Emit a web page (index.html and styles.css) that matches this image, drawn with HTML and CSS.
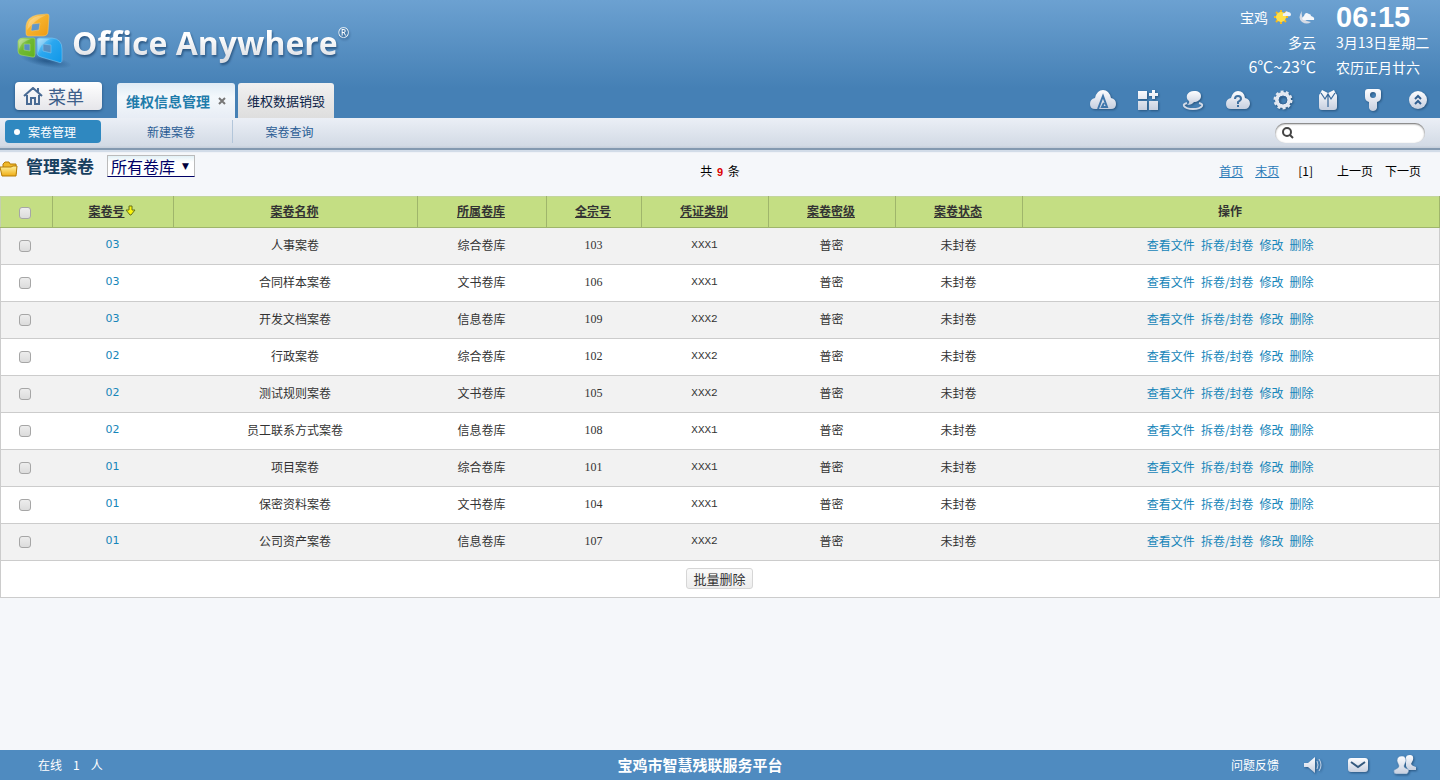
FILE: index.html
```html
<!DOCTYPE html>
<html lang="zh-CN">
<head>
<meta charset="utf-8">
<title>Office Anywhere</title>
<link rel="stylesheet" href="styles.css">
</head>
<body>
<svg class="defs" aria-hidden="true">
  <defs>
    <linearGradient id="silver" x1="0" y1="0" x2="0" y2="1"><stop offset="0" stop-color="#fdfdff"/><stop offset="1" stop-color="#c6cfdf"/></linearGradient>
    <linearGradient id="orange" x1="0" y1="0" x2="1" y2="1"><stop offset="0" stop-color="#fbdc92"/><stop offset=".4" stop-color="#f6b32d"/><stop offset="1" stop-color="#ee9a14"/></linearGradient>
    <linearGradient id="green" x1="0" y1="0" x2="1" y2="1"><stop offset="0" stop-color="#b9e08e"/><stop offset=".4" stop-color="#72b935"/><stop offset="1" stop-color="#62b31e"/></linearGradient>
    <linearGradient id="blue" x1="0" y1="0" x2="1" y2="1"><stop offset="0" stop-color="#9ddaf8"/><stop offset=".4" stop-color="#2ba7ef"/><stop offset="1" stop-color="#0f97e8"/></linearGradient>
    <linearGradient id="gold" x1="0" y1="0" x2="0" y2="1"><stop offset="0" stop-color="#fff3a0"/><stop offset="1" stop-color="#efac14"/></linearGradient>
    <radialGradient id="shade"><stop offset="0" stop-color="#1d4f80" stop-opacity=".8"/><stop offset="1" stop-color="#1d4f80" stop-opacity="0"/></radialGradient>
  </defs>
</svg>

<header class="header">
  <div class="brand">
    <svg class="brand-mark" width="60" height="60" viewBox="0 0 60 60" aria-hidden="true">
      <ellipse cx="34" cy="50" rx="26" ry="6" fill="url(#shade)" transform="rotate(10 34 50)"/>
      <path fill="url(#orange)" stroke="#f9c765" stroke-width=".6" fill-rule="evenodd" d="M14 15Q15 6 25 4L35 3Q37 3 37 5L36 20Q36 25 31 25L16 25Q14 25 14 22ZM20 13L19 19Q19 20 20 20L27 19L28 12Z"/>
      <path fill="url(#green)" stroke="#a5d96f" stroke-width=".6" fill-rule="evenodd" d="M6 30Q7 27 11 27L22 27Q23 27 23 29L23 44Q23 47 20 46L9 44Q6 43 6 40ZM12 33V39L18 40V33Z"/>
      <path fill="url(#blue)" stroke="#7cc8f4" stroke-width=".6" fill-rule="evenodd" d="M25 29Q25 27 28 27L40 27Q50 28 50 38L50 49Q50 53 46 51L29 46Q25 45 25 42ZM31 33V40L39 42V34Z"/>
      <path fill="#fff" opacity=".25" d="M15 19Q16 7 26 5L34 4Q23 9 15 19ZM26 42V30Q26 28 29 28H38Q29 32 26 42ZM7 38V31Q8 28 11 28H19Q10 30 7 38Z"/>
    </svg>
    <h1 class="brand-name">Office Anywhere<sup class="reg">®</sup></h1>
  </div>

  <div class="status">
    <div class="weather">
      <div class="city"><span>宝鸡</span>
        <svg width="18" height="16" viewBox="0 0 18 16" aria-hidden="true"><path d="M7 1V15M0 8H14M2 3L12 13M12 3L2 13" stroke="#f3b71f" stroke-width="2"/><circle cx="7" cy="8" r="5" fill="#ffe14a"/><path fill="#eef2f8" d="M9 7Q8 4 11 4Q12 1 14 3Q17 3 17 6Q16 8 14 7Z"/></svg>
        <svg width="18" height="16" viewBox="0 0 18 16" aria-hidden="true"><path fill="#d6dbe5" d="M4 2Q2 12 13 13Q9 16 4 13Q-1 9 4 2Z"/><path fill="#f6f8fb" d="M5 11Q3 9 6 7Q7 2 11 5Q13 5 13 7Q17 8 16 11Z"/></svg>
      </div>
      <div class="sky">多云</div>
      <div class="temp">6℃~23℃</div>
    </div>
    <div class="clock">
      <time class="time">06:15</time>
      <div class="date">3月13日星期二</div>
      <div class="lunar">农历正月廿六</div>
    </div>
  </div>

  <button class="menu" type="button">
    <svg width="20" height="18" viewBox="0 0 20 18" fill="none" stroke="#4a6b94" stroke-width="2" aria-hidden="true"><path d="M1 9L10 1L19 9M4 8V17H8V11H12V17H16V8M15 1V5"/></svg>
    <span>菜单</span>
  </button>
  <nav class="tabs">
    <div class="tab tab-on"><a href="#">维权信息管理</a><button class="close" type="button" aria-label="关闭"><svg width="8" height="8" viewBox="0 0 8 8" stroke="#777" stroke-width="2"><path d="M1 1L7 7M7 1L1 7"/></svg></button></div>
    <div class="tab"><a href="#">维权数据销毁</a></div>
  </nav>
  <div class="tools">
    <button type="button" aria-label="应用"><svg width="28" height="22" viewBox="0 0 28 22"><path fill="url(#silver)" d="M6 20Q1 20 1 15Q1 10 6 9Q8 1 14 1Q20 1 22 9Q27 10 27 15Q27 20 22 20Z"/><path fill="none" stroke="#3f76ab" stroke-width="2" d="M9 20L14 7L18 18H13L15 14"/></svg></button>
    <button type="button" aria-label="门户"><svg width="22" height="22" viewBox="0 0 22 22" fill="url(#silver)"><path d="M1 2H10V10H1ZM1 12H10V21H1ZM12 12H21V21H12ZM15 1H18V4H21V7H18V10H15V7H12V4H15Z"/></svg></button>
    <button type="button" aria-label="消息"><svg width="22" height="22" viewBox="0 0 22 22"><path fill="none" stroke="#d2dae7" stroke-width="2" d="M5 14Q1 15 2 17Q4 20 11 20Q18 20 20 17Q21 15 17 14"/><path fill="url(#silver)" d="M12 2C17 2 19 4 19 7C19 11 15 13 12 13Q10 16 5 16Q8 14 7 12Q4 10 5 6Q7 2 12 2Z"/></svg></button>
    <button type="button" aria-label="帮助"><svg width="26" height="22" viewBox="0 0 26 22"><path fill="url(#silver)" d="M6 20Q1 20 1 15Q1 10 6 9Q8 2 13 2Q19 2 20 9Q25 10 25 15Q24 20 20 20Z"/><path fill="none" stroke="#3f70a0" stroke-width="2" d="M10 10Q10 7 13 7Q16 7 16 10Q16 11 13 13V15M13 16V18"/></svg></button>
    <button type="button" aria-label="设置"><svg width="22" height="22" viewBox="0 0 22 22" fill="none"><circle cx="11" cy="11" r="6" stroke-width="4" stroke="#e3e8f1"/><circle cx="11" cy="11" r="8" stroke-width="3" stroke-dasharray="2.8 2.23" stroke="#e3e8f1"/><circle cx="11" cy="11" r="4" stroke-width="1" stroke="#35679a"/></svg></button>
    <button type="button" aria-label="换肤"><svg width="20" height="22" viewBox="0 0 20 22"><path fill="url(#silver)" d="M4 1L10 4L16 1L18 5Q19 5 19 7V18Q19 21 16 21H4Q1 21 1 18V7Q1 5 2 5Z"/><path fill="none" stroke="#35679a" stroke-width="1.2" d="M3 4L7 10L10 5L13 10L17 4M10 6V18"/></svg></button>
    <button type="button" aria-label="密码"><svg width="18" height="22" viewBox="0 0 18 22"><path fill="url(#silver)" fill-rule="evenodd" d="M4 0H14Q17 0 17 3V8Q17 12 13 13V19Q12 22 9 22Q6 22 5 19V13Q1 12 1 8V3Q1 0 4 0ZM9 3A3 3 0 1 0 9 9A3 3 0 1 0 9 3Z"/></svg></button>
    <button type="button" aria-label="收起"><svg width="18" height="22" viewBox="0 0 18 22"><circle cx="9" cy="11" r="9" fill="url(#silver)"/><path fill="none" stroke="#315f91" stroke-width="2" d="M6 10L9 7L12 10M6 15L9 12L12 15"/></svg></button>
  </div>
</header>

<nav class="subnav">
  <a class="sub sub-on" href="#">案卷管理</a>
  <a class="sub" href="#">新建案卷</a>
  <a class="sub sub-line" href="#">案卷查询</a>
  <label class="search">
    <svg width="12" height="12" viewBox="0 0 12 12" fill="none" stroke="#444" stroke-width="2" aria-hidden="true"><circle cx="5" cy="5" r="4"/><path d="M8 8L11 11"/></svg>
    <input type="search" aria-label="搜索">
  </label>
</nav>

<main class="main">
  <div class="bar">
    <div class="bar-title">
      <svg width="18" height="16" viewBox="0 0 18 16" aria-hidden="true"><path fill="#f0b829" stroke="#b57d08" d="M3 13V3L5 1H9L10 3H16V13Z"/><path fill="url(#gold)" stroke="#b57d08" d="M0 6H11L13 5H17L16 15H2Z"/></svg>
      <h2>管理案卷</h2>
      <span class="pick"><select aria-label="卷库"><option>所有卷库</option></select></span>
    </div>
    <p class="count">共 <b>9</b> 条</p>
    <div class="pager"><a href="#">首页</a><a href="#">末页</a><span class="cur">[1]</span><span class="prev">上一页</span><span>下一页</span></div>
  </div>

  <table class="grid">
    <colgroup><col class="c-check"><col class="c-no"><col class="c-name"><col class="c-lib"><col class="c-all"><col class="c-mid"><col class="c-mid"><col class="c-mid"><col></colgroup>
    <thead><tr>
      <th><input type="checkbox" aria-label="全选"></th>
      <th><a href="#">案卷号</a><svg class="sort" width="11" height="11" viewBox="0 0 11 11" aria-hidden="true"><path fill="#fbf40b" stroke="#66701a" d="M4 1H7V5H10L6 10H5L1 5H4Z"/></svg></th>
      <th><a href="#">案卷名称</a></th><th><a href="#">所属卷库</a></th><th><a href="#">全宗号</a></th><th><a href="#">凭证类别</a></th><th><a href="#">案卷密级</a></th><th><a href="#">案卷状态</a></th><th>操作</th>
    </tr></thead>
    <tbody>
      <tr><td><input type="checkbox" aria-label="人事案卷"></td><td class="no"><a href="#">03</a></td><td>人事案卷</td><td>综合卷库</td><td class="num">103</td><td class="code">XXX1</td><td>普密</td><td>未封卷</td><td class="ops"><a href="#">查看文件</a><a href="#">拆卷/封卷</a><a href="#">修改</a><a href="#">删除</a></td></tr>
      <tr><td><input type="checkbox" aria-label="合同样本案卷"></td><td class="no"><a href="#">03</a></td><td>合同样本案卷</td><td>文书卷库</td><td class="num">106</td><td class="code">XXX1</td><td>普密</td><td>未封卷</td><td class="ops"><a href="#">查看文件</a><a href="#">拆卷/封卷</a><a href="#">修改</a><a href="#">删除</a></td></tr>
      <tr><td><input type="checkbox" aria-label="开发文档案卷"></td><td class="no"><a href="#">03</a></td><td>开发文档案卷</td><td>信息卷库</td><td class="num">109</td><td class="code">XXX2</td><td>普密</td><td>未封卷</td><td class="ops"><a href="#">查看文件</a><a href="#">拆卷/封卷</a><a href="#">修改</a><a href="#">删除</a></td></tr>
      <tr><td><input type="checkbox" aria-label="行政案卷"></td><td class="no"><a href="#">02</a></td><td>行政案卷</td><td>综合卷库</td><td class="num">102</td><td class="code">XXX2</td><td>普密</td><td>未封卷</td><td class="ops"><a href="#">查看文件</a><a href="#">拆卷/封卷</a><a href="#">修改</a><a href="#">删除</a></td></tr>
      <tr><td><input type="checkbox" aria-label="测试规则案卷"></td><td class="no"><a href="#">02</a></td><td>测试规则案卷</td><td>文书卷库</td><td class="num">105</td><td class="code">XXX2</td><td>普密</td><td>未封卷</td><td class="ops"><a href="#">查看文件</a><a href="#">拆卷/封卷</a><a href="#">修改</a><a href="#">删除</a></td></tr>
      <tr><td><input type="checkbox" aria-label="员工联系方式案卷"></td><td class="no"><a href="#">02</a></td><td>员工联系方式案卷</td><td>信息卷库</td><td class="num">108</td><td class="code">XXX1</td><td>普密</td><td>未封卷</td><td class="ops"><a href="#">查看文件</a><a href="#">拆卷/封卷</a><a href="#">修改</a><a href="#">删除</a></td></tr>
      <tr><td><input type="checkbox" aria-label="项目案卷"></td><td class="no"><a href="#">01</a></td><td>项目案卷</td><td>综合卷库</td><td class="num">101</td><td class="code">XXX1</td><td>普密</td><td>未封卷</td><td class="ops"><a href="#">查看文件</a><a href="#">拆卷/封卷</a><a href="#">修改</a><a href="#">删除</a></td></tr>
      <tr><td><input type="checkbox" aria-label="保密资料案卷"></td><td class="no"><a href="#">01</a></td><td>保密资料案卷</td><td>文书卷库</td><td class="num">104</td><td class="code">XXX1</td><td>普密</td><td>未封卷</td><td class="ops"><a href="#">查看文件</a><a href="#">拆卷/封卷</a><a href="#">修改</a><a href="#">删除</a></td></tr>
      <tr><td><input type="checkbox" aria-label="公司资产案卷"></td><td class="no"><a href="#">01</a></td><td>公司资产案卷</td><td>信息卷库</td><td class="num">107</td><td class="code">XXX2</td><td>普密</td><td>未封卷</td><td class="ops"><a href="#">查看文件</a><a href="#">拆卷/封卷</a><a href="#">修改</a><a href="#">删除</a></td></tr>
    </tbody>
    <tfoot><tr><td colspan="9"><button class="batch" type="button">批量删除</button></td></tr></tfoot>
  </table>
</main>

<footer class="footer">
  <div class="online"><span>在线</span><span class="online-n">1</span><span>人</span></div>
  <div class="platform">宝鸡市智慧残联服务平台</div>
  <div class="foot-tools">
    <a href="#">问题反馈</a>
    <button type="button" aria-label="声音"><svg width="20" height="20" viewBox="0 0 20 20"><path fill="url(#silver)" d="M1 8H5L12 2V18L5 12H1Z"/><path fill="none" stroke="#c4d2e4" d="M14 6Q16 10 14 14M16 4Q20 10 16 16"/></svg></button>
    <button type="button" aria-label="短信"><svg width="22" height="18" viewBox="0 0 22 18"><rect x="1" y="2" width="20" height="14" rx="3" fill="url(#silver)"/><path fill="none" stroke="#34597e" stroke-width="2" d="M4 6L11 11L18 6"/></svg></button>
    <button type="button" aria-label="组织"><svg width="24" height="20" viewBox="0 0 24 20" fill="url(#silver)"><path d="M13 5Q12 0 17 0Q21 0 20 5L18 9Q19 11 23 12V15H15L13 11Z"/><path stroke="#5b8cba" stroke-width=".5" d="M4 6Q4 1 9 1Q13 1 13 6L11 11Q11 13 15 14Q17 16 14 19H3Q0 19 1 15Q6 13 6 11Z"/></svg></button>
  </div>
</footer>
</body>
</html>
```

FILE: styles.css
```css
* { box-sizing: border-box; }
html, body { margin: 0; }
body {
  display: flex;
  flex-direction: column;
  min-height: 100vh;
  background: #f5f7fa;
  color: #333;
  font: 12px/16px "Noto Sans CJK SC", sans-serif;
}
a { color: #1585b9; text-decoration: none; }
h1, h2, p { margin: 0; }
svg { display: block; flex: none; }
button { border: 0; padding: 0; background: none; font: inherit; color: inherit; cursor: pointer; }
.defs { position: absolute; width: 0; height: 0; }

.header {
  display: grid;
  grid-template-columns: 102px auto 1fr;
  grid-template-rows: 82px 36px;
  background: linear-gradient(#6ca1d1, #4580b5 75%, #4580b5);
}
.brand { grid-column: 1 / 3; display: flex; padding: 11px 0 0 12px; }
.brand-name {
  display: flex;
  align-items: flex-start;
  padding-top: 8px;
  font: 700 32px/48px "Open Sans", sans-serif;
  white-space: nowrap;
  color: transparent;
  background: linear-gradient(#fff 35%, #c9ced6 85%);
  background-clip: text;
  -webkit-background-clip: text;
  filter: drop-shadow(1px 2px 1px #2c5884);
}
.reg { font: 14px/28px "Open Sans", sans-serif; }
.status { display: flex; justify-content: flex-end; gap: 20px; color: #fff; padding: 3px 9px 0 0; }
.weather { text-align: right; }
.city { display: flex; align-items: center; justify-content: flex-end; gap: 6px; height: 28px; font-size: 14px; }
.sky { font-size: 14px; line-height: 22px; }
.temp { font-size: 16px; line-height: 26px; }
.clock { width: 95px; font-size: 14px; white-space: nowrap; }
.time { display: block; font: bold 29px/28px "Liberation Sans", sans-serif; }
.date { line-height: 22px; }
.lunar { line-height: 28px; }

.menu {
  display: flex;
  align-items: center;
  gap: 5px;
  width: 87px;
  height: 28px;
  margin-left: 15px;
  padding-left: 8px;
  border-radius: 4px;
  background: linear-gradient(#fff, #e6e6ea);
  box-shadow: 0 1px 3px #234e7a;
  color: #3d5f8a;
  font-size: 18px;
}
.tabs { display: flex; align-items: flex-end; gap: 3px; padding-left: 15px; }
.tab {
  display: flex;
  align-items: center;
  gap: 8px;
  height: 35px;
  padding: 0 9px;
  border-radius: 3px 3px 0 0;
  background: linear-gradient(#f0f0f0, #dedede);
  font-size: 13px;
}
.tab a { color: #0c2347; }
.tab-on { background: linear-gradient(#dfebf5, #f3f8fc 40%, #e8edf5); font-size: 14px; font-weight: 700; }
.tab-on a { color: #1f7cab; }
.tools { display: flex; justify-content: flex-end; align-items: center; }
.tools button { display: flex; justify-content: center; width: 45px; }
.tools svg, .foot-tools svg { filter: drop-shadow(1px 1px 1px #285580); }

.subnav {
  display: flex;
  align-items: center;
  height: 32px;
  padding: 0 15px 3px 5px;
  background: linear-gradient(#ebeff6, #d2dae5 28px, #c7d0dc 29px);
  border-bottom: 2px solid #8399b0;
  box-shadow: 0 2px 1px #d2dce8;
}
.sub { width: 114px; color: #2a5c94; text-align: center; line-height: 23px; }
.sub-on {
  display: flex;
  align-items: center;
  gap: 8px;
  width: 96px;
  margin-right: 9px;
  padding-left: 9px;
  border-radius: 4px;
  background: #2f88c0;
  color: #fff;
}
.sub-on::before { content: ""; width: 6px; height: 6px; border-radius: 50%; background: #fff; }
.sub-line { border-left: 1px solid #b3c6da; }
.subnav .sub:nth-child(2) { width: 122px; }
.search {
  display: flex;
  align-items: center;
  gap: 6px;
  width: 150px;
  height: 20px;
  margin: 2px 0 0 auto;
  padding: 0 7px;
  border-radius: 10px;
  background: #fff;
  box-shadow: inset 0 1px 2px #666;
}
.search input { flex: 1; min-width: 0; height: 16px; border: 0; padding: 0; outline: 0; background: none; }

.main { flex: 1; }
.bar { display: grid; grid-template-columns: 1fr auto 1fr; height: 46px; color: #000; }
.bar-title { display: flex; align-items: flex-start; padding-top: 4px; }
.bar-title svg { margin-top: 7px; }
.bar-title h2 { margin: 0 13px 0 8px; font-size: 17px; line-height: 24px; color: #17405f; }
.pick { position: relative; }
.pick::after { content: "▼"; position: absolute; right: 6px; top: 4px; font: 9px/16px "DejaVu Sans", sans-serif; color: #00003c; pointer-events: none; }
.pick select {
  appearance: none;
  width: 88px;
  height: 22px;
  margin-top: 1px;
  padding: 0 3px;
  border: 1px solid #bbb;
  border-bottom-color: #000066;
  border-radius: 0;
  background: linear-gradient(#e2f0f6, #fff 6px);
  color: #000066;
  font: 16px/20px "Noto Sans CJK SC", sans-serif;
}
.count { padding-top: 13px; }
.count b { margin: 0 2px; color: #d00; font: bold 11px/16px "Liberation Sans", sans-serif; }
.pager { display: flex; justify-content: flex-end; gap: 12px; padding: 13px 19px 0 0; }
.pager a { color: #2a7ab8; text-decoration: underline; }
.cur { margin: 0 12px 0 7px; }

.grid { width: 100%; table-layout: fixed; border-collapse: collapse; border: 1px solid #ccc; text-align: center; }
.c-check { width: 52px; }
.c-no { width: 121px; }
.c-name { width: 244px; }
.c-lib { width: 129px; }
.c-all { width: 95px; }
.c-mid { width: 127px; }
.grid th { height: 31px; padding: 0 2px 2px 0; border: 1px solid #9fb56b; border-top-color: #c3d59d; background: #c4de83; font-weight: 700; }
.grid th:first-child { border-left-color: #c4cfad; }
.grid th a { color: #333; text-decoration: underline; }
.grid td { height: 37px; padding: 0 1px 3px 0; border-bottom: 1px solid #ccc; background: #fff; }
.grid tbody tr:nth-child(odd) td { background: #f2f2f2; }
.grid input {
  appearance: none;
  display: block;
  width: 12px;
  height: 12px;
  margin: 3px auto 0 18px;
  border: 1px solid #a6a6a6;
  border-radius: 3px;
  background: linear-gradient(#ededed, #dcdcdc);
}
.sort { display: inline-block; }
.no { font: 11px/16px "DejaVu Sans", sans-serif; }
.num { font: 12px/16px "Liberation Serif", serif; }
.code { font: 11px/16px "Liberation Mono", monospace; }
.ops a + a { margin-left: 6px; }
.grid .batch { height: 21px; padding: 0 6px; margin-top: 2px; border: 1px solid #d6d6d6; border-radius: 3px; background: linear-gradient(#fafafa, #ededed); font-size: 13px; line-height: 18px; }

.footer { display: grid; grid-template-columns: 1fr auto 1fr; align-items: center; height: 30px; background: #4f8bc0; color: #fff; }
.online { display: flex; gap: 11px; padding-left: 38px; }
.platform { padding-right: 40px; font-size: 15px; font-weight: 700; }
.foot-tools { display: flex; justify-content: flex-end; align-items: center; gap: 24px; padding-right: 23px; }
.foot-tools a { color: #fff; }
```
